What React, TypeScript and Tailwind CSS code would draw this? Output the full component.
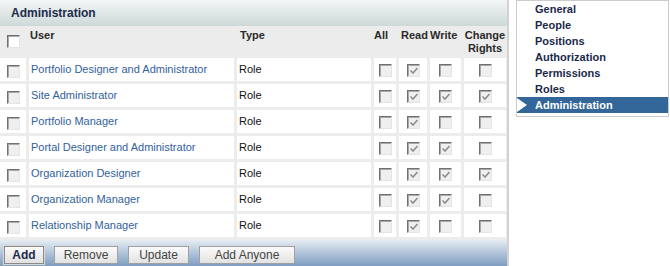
import React from "react";

type Row = { name: string; perms: number[] };

const rows: Row[] = [
  { name: "Portfolio Designer and Administrator", perms: [0, 1, 0, 0] },
  { name: "Site Administrator", perms: [0, 1, 1, 1] },
  { name: "Portfolio Manager", perms: [0, 1, 0, 0] },
  { name: "Portal Designer and Administrator", perms: [0, 1, 1, 0] },
  { name: "Organization Designer", perms: [0, 1, 1, 1] },
  { name: "Organization Manager", perms: [0, 1, 1, 0] },
  { name: "Relationship Manager", perms: [0, 1, 0, 0] },
];

const nav = ["General", "People", "Positions", "Authorization", "Permissions", "Roles", "Administration"];

function Box({ checked = false, white = false }: { checked?: boolean; white?: boolean }) {
  return (
    <span
      className={
        "relative block h-[13px] w-[13px] border border-t-[#707070] border-l-[#707070] border-r-[#e4e4e4] border-b-[#e4e4e4] shadow-[inset_1px_1px_0_#a8a8a8] " +
        (white ? "bg-white" : "bg-[#efefef]")
      }
    >
      {checked && (
        <svg className="absolute left-[1px] top-[1px]" width="10" height="10" viewBox="0 0 10 10">
          <polyline points="1.5,4.5 4,7 8.5,2" fill="none" stroke="#8e8e8e" strokeWidth="1.6" />
        </svg>
      )}
    </span>
  );
}

export default function App() {
  return (
    <div className="flex h-[266px] w-[670px] overflow-hidden bg-white font-['Liberation_Sans',Arial,sans-serif]">
      {/* Main panel */}
      <div className="flex h-[266px] w-[509px] flex-col border-r-2 border-[#d2d2d2]">
        <div className="flex h-[26px] items-center bg-gradient-to-b from-[#f3f6f6] to-[#cdd9d8] pl-[11px] text-[12px] font-bold text-[#1d2b4b]">
          Administration
        </div>
        <div className="grid grid-cols-[26px_205px_134px_22px_28px_31px_42px] gap-[3px] bg-[#ececec] pb-[3px] pr-[1px] text-[11px] leading-[13px]">
          {/* Header */}
          <div className="flex h-[28px] justify-center pt-[9px]">
            <Box white />
          </div>
          <div className="pl-[1px] pt-[3px] font-bold text-[#2a2a2a]">User</div>
          <div className="pl-[3px] pt-[3px] font-bold text-[#2a2a2a]">Type</div>
          <div className="pt-[3px] font-bold text-[#2a2a2a]">All</div>
          <div className="pl-[2px] pt-[3px] font-bold text-[#2a2a2a]">Read</div>
          <div className="pt-[3px] font-bold text-[#2a2a2a]">Write</div>
          <div className="pt-[3px] text-center font-bold text-[#2a2a2a]">
            Change
            <br />
            Rights
          </div>
          {/* Rows */}
          {rows.map((r) => (
            <React.Fragment key={r.name}>
              <div className="flex h-[23px] items-center justify-center bg-white pt-[3px]">
                <Box />
              </div>
              <div className="flex h-[23px] items-center bg-white pl-[2px] text-[#32629c]">{r.name}</div>
              <div className="flex h-[23px] items-center bg-white pl-[2px] text-[#111]">Role</div>
              {r.perms.map((p, i) => (
                <div key={i} className="flex h-[23px] items-center justify-center bg-white pt-[2px]">
                  <Box checked={p === 1} />
                </div>
              ))}
            </React.Fragment>
          ))}
        </div>
        <div className="flex flex-1 gap-[10px] bg-gradient-to-b from-[#e6ecf2] to-[#7e9dc0] pl-[4px] pt-[6px]">
          <button className="h-[18px] w-[40px] border border-[#8a8a8a] bg-gradient-to-b from-[#fbfbfb] to-[#e0e0e0] text-[12px] leading-[16px] font-bold text-[#1d2b4b] shadow-[0_0_0_1px_#d8d8d8]">
            Add
          </button>
          <button className="h-[18px] w-[64px] border border-[#a0a0a0] bg-gradient-to-b from-[#fbfbfb] to-[#e2e2e2] text-[12px] leading-[16px] text-[#444]">
            Remove
          </button>
          <button className="h-[18px] w-[61px] border border-[#a0a0a0] bg-gradient-to-b from-[#fbfbfb] to-[#e2e2e2] text-[12px] leading-[16px] text-[#444]">
            Update
          </button>
          <button className="h-[18px] w-[96px] border border-[#a0a0a0] bg-gradient-to-b from-[#fbfbfb] to-[#e2e2e2] text-[12px] leading-[16px] text-[#444]">
            Add Anyone
          </button>
        </div>
      </div>

      {/* Right nav */}
      <div className="ml-[7px] h-[117px] w-[153px] border border-[#cccccc]">
        {nav.map((n) => {
          const sel = n === "Administration";
          return (
            <div
              key={n}
              className={
                "relative flex h-[16px] items-center pl-[18px] text-[11px] font-bold " +
                (sel ? "bg-[#336699] text-white" : "text-[#1b2a4c]")
              }
            >
              {sel && (
                <svg className="absolute left-0 top-[1px]" width="11" height="14" viewBox="0 0 11 14">
                  <polygon points="0,0 10,7 0,14" fill="#ffffff" />
                </svg>
              )}
              {n}
            </div>
          );
        })}
      </div>
    </div>
  );
}
